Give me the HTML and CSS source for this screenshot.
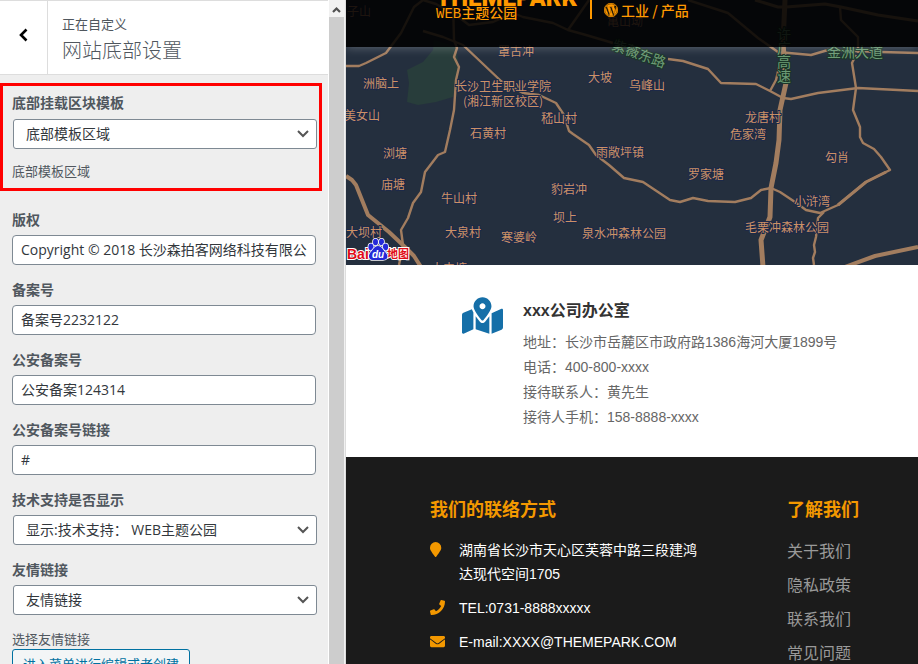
FILE: index.html
```html
<!DOCTYPE html>
<html lang="zh-CN">
<head>
<meta charset="utf-8">
<title>网站底部设置</title>
<link rel="stylesheet" href="styles.css">
</head>
<body>
<div class="app">
  <aside class="panel">
    <header class="panel-head">
      <button class="back" type="button" aria-label="返回">
        <svg width="9" height="14" viewBox="0 0 9 14"><path d="M7.500 1.500 2 7l5.500 5.500" fill="none" stroke="#000" stroke-width="2.600"/></svg>
      </button>
      <div class="panel-title">
        <span class="crumb">正在自定义</span>
        <h1>网站底部设置</h1>
      </div>
    </header>
    <form class="fields">
      <section class="marked">
        <label for="tpl">底部挂载区块模板</label>
        <select id="tpl"><option>底部模板区域</option></select>
        <p class="hint">底部模板区域</p>
      </section>
      <div class="field"><label for="copy">版权</label><input id="copy" type="text" value="Copyright © 2018 长沙森拍客网络科技有限公司"></div>
      <div class="field"><label for="icp">备案号</label><input id="icp" type="text" value="备案号2232122"></div>
      <div class="field"><label for="police">公安备案号</label><input id="police" type="text" value="公安备案124314"></div>
      <div class="field"><label for="plink">公安备案号链接</label><input id="plink" type="text" value="#"></div>
      <div class="field"><label for="tech">技术支持是否显示</label><select id="tech"><option>显示:技术支持： WEB主题公园</option></select></div>
      <div class="field"><label for="links">友情链接</label><select id="links"><option>友情链接</option></select></div>
      <p class="pick">选择友情链接</p>
      <button class="menu-btn" type="button">进入菜单进行编辑或者创建</button>
    </form>
  </aside>
  <div class="track">
    <svg class="track-up" width="15" height="16" viewBox="0 0 15 16"><path d="M4 11l3.500-3.500L11 11" fill="none" stroke="#505050" stroke-width="2.200"/></svg>
    <div class="thumb"></div>
  </div>
  <main class="preview">
    <section class="map-area">
      <svg class="map" viewBox="0 0 572 265" preserveAspectRatio="xMinYMin slice">
        <rect width="572" height="265" fill="#242f3e"/>
        <path d="M88 40L110 47 113 67 107 97 90 102 72 105 61 102 63 83 61 70 77 62 87 50z" fill="#283d3b"/>
        <g fill="none" stroke="#a27d5f" stroke-width="2.400" stroke-linejoin="round">
          <path d="M0 66H13L20 63 40 53 55 33 68 7 77 0 90 4 110 15 123 25 147 22 167 13 177 17 207 23 222 30 240 35 267 43M222 30L243 0"/>
          <path d="M107 0L108 40 111 48 108 57 113 67 110 80 108 110 104 130 99 152 92 155 79 172 75 192 67 203 62 218 55 230 57 245 53 265"/>
          <path d="M77 31L97 37 117 45 155 81 177 93 193 95 210 103 218 115 223 131 227 134 243 145 250 155 263 165 278 178 297 182 324 200 334 202 347 198 362 201 389 202 405 198 415 190 425 188 434 192 449 202 460 210 474 213 492 205 520 182 544 170 535 157 528 149 517 143 514 137 514 127 507 110 510 88 506 63 510 55"/>
          <path d="M322 59L337 61 362 69 375 83 410 84 424 91 437 98 445 99 472 93 512 88 572 91M424 91L430 80 434 63"/>
          <path d="M342 0L382 13 412 38 432 52 465 55 482 50 535 52 572 53M494 7L495 20 512 37V53"/>
          <path d="M478 212L472 218 471 228 470 237 468 245 469 252 467 258 468 265"/>
        </g>
        <g fill="none" stroke="#a27d5f" stroke-width="4" stroke-linejoin="round">
          <path d="M0 176L6 180 10 185 22 215 43 232 60 248 68 256 75 267"/>
          <path d="M409 0L432 7H440L479 4 495 7 532 15 572 21M492 205L520 182 540 172" stroke-width="3"/>
          <path d="M439 0L437 43 440 83 434 110 433 140 430 163 425 188 424 217 415 240 417 267" stroke-width="5"/>
          <path d="M499 267L529 256 572 247"/>
        </g>
        <g class="places">
          <text x="1" y="16">子山</text><text x="261" y="26">亀山坳</text>
          <text x="152" y="56">罩古冲</text><text x="17" y="88">洲脑上</text>
          <text x="109" y="91">长沙卫生职业学院</text><text x="117" y="106">(湘江新区校区)</text>
          <text x="242" y="82">大坡</text><text x="283" y="90">乌峰山</text>
          <text x="-2" y="120">美女山</text><text x="195" y="123">嵇山村</text>
          <text x="124" y="138">石黄村</text><text x="37" y="158">浏塘</text>
          <text x="35" y="189">庙塘</text><text x="250" y="157">雨敞坪镇</text>
          <text x="399" y="122">龙唐村</text><text x="384" y="139">危家湾</text>
          <text x="479" y="162">勾肖</text><text x="342" y="179">罗家塘</text>
          <text x="95" y="203">牛山村</text><text x="205" y="194">豹岩冲</text>
          <text x="207" y="222">坝上</text><text x="448" y="206">小浒湾</text>
          <text x="0" y="237">大坝村</text><text x="99" y="237">大泉村</text>
          <text x="155" y="242">寒婆岭</text><text x="236" y="238">泉水冲森林公园</text>
          <text x="399" y="232">毛栗冲森林公园</text><text x="85" y="273">大中塘</text>
        </g>
        <g class="roads">
          <text transform="translate(265 49) rotate(20)">紫薇东路</text>
          <text x="481" y="57">金洲大道</text>
          <text x="438" y="27" class="down">许广高速</text>
        </g>
        <g class="baidu">
          <text x="1" y="259">Bai</text><text x="41" y="258" class="cn">地图</text>
          <g fill="#2529d8" stroke="#fff" stroke-width="1.600" paint-order="stroke">
            <ellipse cx="25" cy="247" rx="2.600" ry="3.400"/><ellipse cx="29.500" cy="242" rx="2.500" ry="3.200"/><ellipse cx="35.500" cy="242" rx="2.500" ry="3.200"/><ellipse cx="39.500" cy="247" rx="2.600" ry="3.400"/>
            <path d="M32 246c4 0 5 4 8 7 3 4 1 7-3 7-3 0-7 0-10 0-4 0-5-4-3-7 3-3 4-7 8-7z"/>
          </g>
          <text x="26" y="258" class="du">du</text>
        </g>
      </svg>
      <header class="site-head">
        <div class="brand"><strong>THEMEPARK</strong><span>WEB主题公园</span></div>
        <div class="tag">
          <svg width="14" height="14" viewBox="0 0 512 512"><path fill="#f90" d="M61.700 169.400l101.500 278C92.200 413 43.300 340.200 43.300 256c0-30.900 6.600-60.100 18.400-86.600zm337.900 75.900c0-26.300-9.400-44.500-17.500-58.700-10.800-17.500-20.900-32.400-20.900-49.900 0-19.600 14.800-37.800 35.700-37.800.900 0 1.800.1 2.800.2-37.900-34.700-88.300-55.900-143.700-55.900-74.300 0-139.700 38.100-177.800 95.900 5 .2 9.700.3 13.700.3 22.200 0 56.700-2.700 56.700-2.700 11.500-.7 12.800 16.200 1.400 17.500 0 0-11.500 1.300-24.300 2l77.500 230.400L249.800 247l-33.100-90.800c-11.500-.7-22.300-2-22.300-2-11.500-.7-10.100-18.200 1.300-17.500 0 0 35.100 2.700 56 2.700 22.200 0 56.700-2.700 56.700-2.700 11.500-.7 12.800 16.200 1.400 17.500 0 0-11.500 1.300-24.300 2l76.900 228.700 21.200-70.900c9-29.400 16-50.500 16-68.700zm-139.900 29.300l-63.800 185.500c19.100 5.600 39.200 8.700 60.100 8.700 24.800 0 48.500-4.300 70.600-12.100-.6-.9-1.100-1.900-1.500-2.900l-65.400-179.200zm183-120.700c.9 6.800 1.400 14 1.400 21.900 0 21.600-4 45.800-16.200 76.200l-65 187.900C426.200 403 468.700 334.500 468.700 256c0-37-9.400-71.800-26-102.100zM504 256c0 136.800-111.300 248-248 248C119.200 504 8 392.700 8 256 8 119.200 119.200 8 256 8c136.700 0 248 111.200 248 248zm-11.400 0c0-130.500-106.200-236.600-236.600-236.600C125.500 19.400 19.400 125.500 19.400 256S125.600 492.600 256 492.600c130.500 0 236.600-106.100 236.600-236.600z" stroke="#f90" stroke-width="18"/></svg>
          <span>工业 / 产品</span>
        </div>
      </header>
    </section>
    <section class="office">
      <svg class="office-icon" width="41" height="37" viewBox="0 0 576 512"><path fill="#156fa8" d="M288 0c-69.590 0-126 56.410-126 126 0 56.260 82.350 158.800 113.900 196.020 6.390 7.540 17.820 7.540 24.200 0C331.650 284.800 414 182.260 414 126 414 56.410 357.590 0 288 0zm0 168c-23.200 0-42-18.800-42-42s18.800-42 42-42 42 18.800 42 42-18.800 42-42 42zM20.120 215.950A32.006 32.006 0 0 0 0 245.660v250.320c0 11.320 11.430 19.060 21.940 14.860L160 448V214.920c-8.840-15.980-16.070-31.540-21.250-46.420L20.120 215.950zM288 359.670c-14.070 0-27.380-6.180-36.510-16.960-19.660-23.200-40.570-49.620-59.490-76.720v182l192 64V266c-18.920 27.090-39.820 53.520-59.490 76.720-9.130 10.770-22.440 16.950-36.510 16.950zm266.060-198.510L416 224v288l139.880-55.950A31.996 31.996 0 0 0 576 426.340V176.020c0-11.320-11.430-19.060-21.940-14.860z"/></svg>
      <div class="office-text">
        <h2>xxx公司办公室</h2>
        <p>地址：长沙市岳麓区市政府路1386海河大厦1899号</p>
        <p>电话：400-800-xxxx</p>
        <p>接待联系人：黄先生</p>
        <p>接待人手机：158-8888-xxxx</p>
      </div>
    </section>
    <footer class="foot">
      <section class="contact">
        <h3>我们的联络方式</h3>
        <ul>
          <li><svg width="15" height="15" viewBox="0 0 512 512"><path fill="#f39800" d="M172 502C27 291 0 270 0 192a192 192 0 0 1 384 0c0 78-27 99-172 310-10 13-30 13-40 0z"/></svg><span>湖南省长沙市天心区芙蓉中路三段建鸿达现代空间1705</span></li>
          <li><svg width="15" height="15" viewBox="0 0 512 512"><path fill="#f39800" d="M493.400 24.600l-104-24c-11.300-2.600-22.900 3.300-27.500 13.900l-48 112c-4.200 9.800-1.400 21.300 6.900 28l60.600 49.600c-36 76.700-98.900 140.500-177.200 177.200l-49.600-60.600c-6.800-8.300-18.200-11.100-28-6.900l-112 48C3.900 366.500-2 378.100.600 389.400l24 104C27.100 504.200 36.700 512 48 512c256.100 0 464-207.500 464-464 0-11.200-7.700-20.900-18.600-23.400z"/></svg><span>TEL:0731-8888xxxxx</span></li>
          <li><svg width="15" height="15" viewBox="0 0 512 512"><path fill="#f39800" d="M502.300 190.800c3.900-3.100 9.700-.2 9.700 4.700V400c0 26.500-21.500 48-48 48H48c-26.500 0-48-21.500-48-48V195.600c0-5 5.700-7.800 9.700-4.700 22.400 17.400 52.100 39.500 154.100 113.600 21.100 15.400 56.700 47.800 92.200 47.600 35.700.3 72-32.800 92.300-47.600 102-74.100 131.600-96.300 154-113.700zM256 320c23.200.4 56.600-29.200 73.400-41.400 132.700-96.300 142.800-104.700 173.400-128.700 5.800-4.500 9.200-11.500 9.200-18.900v-19c0-26.500-21.500-48-48-48H48c-26.500 0-48 21.500-48 48v19c0 7.400 3.400 14.300 9.200 18.900 30.600 23.900 40.700 32.400 173.400 128.700 16.800 12.200 50.200 41.800 73.400 41.400z"/></svg><span>E-mail:XXXX@THEMEPARK.COM</span></li>
        </ul>
      </section>
      <nav class="about">
        <h3>了解我们</h3>
        <a href="#">关于我们</a><a href="#">隐私政策</a><a href="#">联系我们</a><a href="#">常见问题</a>
      </nav>
    </footer>
  </main>
</div>
</body>
</html>
```

FILE: styles.css
```css
* { box-sizing: border-box; }
html, body { margin: 0; height: 100%; }
body { overflow: hidden; font-family: "Open Sans", "Noto Sans CJK SC", sans-serif; font-size: 14px; }
h1, h2, h3, p, ul { margin: 0; padding: 0; font-weight: 400; }
svg { display: block; flex: none; }
.app { display: flex; height: 100vh; overflow: hidden; }

.panel { flex: 0 0 328px; background: #eee; color: #50575e; overflow: hidden; }
.panel-head { display: flex; height: 75px; background: #fff; border-top: 1px solid #ddd; border-bottom: 1px solid #ddd; }
.back { width: 48px; padding: 0 0 6px 19px; border: 0; border-right: 1px solid #ddd; background: #fff; }
.panel-title { padding: 13px 14px 0; }
.crumb { display: block; font-size: 13px; line-height: 20px; }
h1 { font-size: 20px; line-height: 34px; font-weight: 300; }

.fields { padding-top: 8px; }
.marked { width: 322px; padding: 6px 2px 6px 9px; border: 3px solid #f00; }
.field { padding: 0 12px; margin-bottom: 14px; }
.marked + .field { margin-top: 18px; }
label { display: block; margin-bottom: 5px; font-size: 14px; line-height: 22px; font-weight: 600; }
.field label { margin-bottom: 4px; }
input, select { display: block; width: 304px; height: 30px; margin: 0; border: 1px solid #7e8993; border-radius: 4px; background: #fff; color: #32373c; font: 14px "Open Sans", "Noto Sans CJK SC", sans-serif; }
input { padding: 0 8px 2px; }
select { appearance: none; margin-left: 1px; padding: 0 24px 2px 12px; border-radius: 3px; background: #fff url("data:image/svg+xml,%3Csvg xmlns='http://www.w3.org/2000/svg' width='12' height='8'%3E%3Cpath d='M1 1l5 5 5-5' fill='none' stroke='%23555' stroke-width='2'/%3E%3C/svg%3E") no-repeat right 7px center; }
.hint { margin-top: 11px; font-size: 13px; line-height: 22px; }
.pick { padding: 0 12px; font-size: 13px; line-height: 20px; }
.menu-btn { display: block; margin: 0 12px; height: 30px; padding: 0 10px; border: 1px solid #0071a1; border-radius: 3px; background: #f3f5f6; color: #0071a1; font: 13px/26px "Open Sans", "Noto Sans CJK SC", sans-serif; white-space: nowrap; }

.track { flex: 0 0 18px; display: flex; flex-direction: column; padding-top: 1px; background: #f1f1f1; border-left: 1px solid #fff; border-right: 1px solid #ddd; }
.thumb { flex: 1; width: 15px; background: #cdcdcd; }

.preview { flex: 1; min-width: 0; display: flex; flex-direction: column; }
.map-area { position: relative; flex: none; height: 265px; overflow: hidden; background: #242f3e; }
.map { width: 100%; height: 100%; }
.places, .roads { font-family: "Noto Sans CJK SC", sans-serif; font-size: 12px; fill: #cc9166; stroke: #1c2949; stroke-width: 2px; paint-order: stroke; }
.roads { font-size: 14px; fill: #6d9b76; stroke: #1a3527; }
.roads .down { writing-mode: vertical-rl; }
.baidu { font-family: "Liberation Sans", "Noto Sans CJK SC", sans-serif; font-weight: 700; font-size: 14px; fill: #e10b16; stroke: #fff; stroke-width: 2px; paint-order: stroke; }
.baidu .cn { font-size: 11px; }
.baidu .du { font-size: 10px; font-style: italic; fill: #fff; stroke: none; }
.site-head { position: absolute; top: 0; left: 0; right: 0; height: 47px; display: flex; padding-left: 90px; background: rgba(0, 0, 0, .86); box-shadow: 0 0 10px rgba(255, 255, 255, .3); color: #f90; }
.brand { width: 154px; height: 22px; display: flex; flex-direction: column; justify-content: flex-end; }
.brand strong { font: 900 24px/16px Roboto, sans-serif; }
.brand span { font: 500 14px/16px "Liberation Mono", "Noto Sans CJK SC", monospace; }
.tag { display: flex; gap: 3px; align-items: center; height: 19px; padding-left: 12px; border-left: 2px solid #f90; font: 500 14px/20px "Noto Sans CJK SC", sans-serif; }

.office { flex: none; display: flex; gap: 20px; padding: 32px 16px 27px 116px; background: #fff; }
.office-text { font-family: "Liberation Sans", "Noto Sans CJK SC", sans-serif; color: #666; }
h2 { margin-bottom: 5px; font-size: 16px; line-height: 28px; font-weight: 700; color: #333; }
.office p { font-size: 14px; line-height: 25px; white-space: nowrap; }

.foot { flex: 1 0 auto; display: flex; justify-content: space-between; padding: 39px 59px 0 84px; background: #1b1b1b; font-family: "Liberation Sans", "Noto Sans CJK SC", sans-serif; color: #fff; }
h3 { font-size: 18px; line-height: 28px; font-weight: 700; color: #f39800; }
.contact { width: 270px; }
.contact ul { display: grid; gap: 10px; margin-top: 14px; list-style: none; }
.contact li { display: flex; gap: 14px; line-height: 24px; font-size: 14px; }
.contact li svg { margin-top: 4px; }
.about { display: grid; align-content: start; }
.about h3 { margin-bottom: 11px; }
.about a { color: #999; font-size: 16px; line-height: 34px; text-decoration: none; }
```
